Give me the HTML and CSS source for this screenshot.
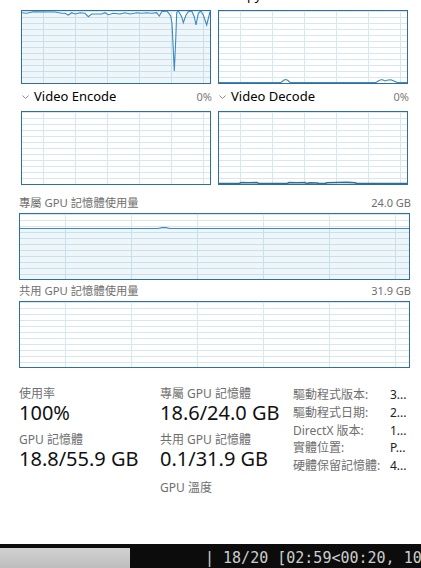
FILE: index.html
```html
<!DOCTYPE html>
<html lang="zh-Hant">
<head>
    <meta charset="UTF-8">
    <meta name="viewport" content="width=device-width, initial-scale=1.0">
    <title>GPU</title>
    <link rel="stylesheet" href="styles.css">
</head>
<body>
    <div class="page">
        <div class="engines">
            <div class="engine">
                <div class="engine-head">
                    <svg class="chev" viewBox="0 0 7 4"><path d="M0.5 0.5 L3.5 3.5 L6.5 0.5"/></svg>
                    <span class="engine-name">3D</span>
                    <span class="engine-pct">100%</span>
                </div>
                <div class="graph">
                    <svg viewBox="0 0 188 72" preserveAspectRatio="none">
                        <path class="area" d="M0 1.7 L4.7 2.3 L11.3 0.7 L33 1 L39.7 2.3 L43 2.3 L46.3 4 L49.7 1.7 L53 3 L58 1.7 L63 2.3 L66.3 5.7 L69.7 3 L79.7 3 L83 1.7 L86.3 3.7 L91.3 2.3 L98 3 L103 1.7 L108 3 L114.7 1.7 L119.7 2.3 L124.7 1.7 L129.7 2.3 L134.7 1.7 L137.3 5 L139.7 0.7 L144.7 0 L146.3 1.7 L148.7 5 L150 12.3 L151.3 39 L152.3 60 L153.7 29 L154.7 1.7 L156.3 0 L159.7 5.7 L161.3 11.7 L164 4 L166.3 0.7 L169.7 0 L172.3 5.7 L174 14 L176.3 2.3 L178.7 0 L181.3 4 L184.7 14 L188 0.7 L188 72 L0 72 Z"/>
                        <polyline class="line" points="0,1.7 4.7,2.3 11.3,0.7 33,1 39.7,2.3 43,2.3 46.3,4 49.7,1.7 53,3 58,1.7 63,2.3 66.3,5.7 69.7,3 79.7,3 83,1.7 86.3,3.7 91.3,2.3 98,3 103,1.7 108,3 114.7,1.7 119.7,2.3 124.7,1.7 129.7,2.3 134.7,1.7 137.3,5 139.7,0.7 144.7,0 146.3,1.7 148.7,5 150,12.3 151.3,39 152.3,60 153.7,29 154.7,1.7 156.3,0 159.7,5.7 161.3,11.7 164,4 166.3,0.7 169.7,0 172.3,5.7 174,14 176.3,2.3 178.7,0 181.3,4 184.7,14 188,0.7"/>
                    </svg>
                </div>
            </div>
            <div class="engine">
                <div class="engine-head">
                    <svg class="chev" viewBox="0 0 7 4"><path d="M0.5 0.5 L3.5 3.5 L6.5 0.5"/></svg>
                    <span class="engine-name">Copy</span>
                    <span class="engine-pct">0%</span>
                </div>
                <div class="graph">
                    <svg viewBox="0 0 188 72" preserveAspectRatio="none">
                        <polyline class="line" points="0,71.5 62,71.5 65,69 67,68.5 69,69.5 71,71.5 157,71.5 160,69.5 163,68.5 166,70 169,69 172,68.8 175,70 178,71.5 188,71.5"/>
                    </svg>
                </div>
            </div>
            <div class="engine">
                <div class="engine-head">
                    <svg class="chev" viewBox="0 0 7 4"><path d="M0.5 0.5 L3.5 3.5 L6.5 0.5"/></svg>
                    <span class="engine-name">Video Encode</span>
                    <span class="engine-pct">0%</span>
                </div>
                <div class="graph"></div>
            </div>
            <div class="engine">
                <div class="engine-head">
                    <svg class="chev" viewBox="0 0 7 4"><path d="M0.5 0.5 L3.5 3.5 L6.5 0.5"/></svg>
                    <span class="engine-name">Video Decode</span>
                    <span class="engine-pct">0%</span>
                </div>
                <div class="graph">
                    <svg viewBox="0 0 188 72" preserveAspectRatio="none">
                        <polyline class="line thick" points="0,71.6 20,71.6 22,70.6 30,70.8 38,70.6 40,71.6 68,71.6 70,70.6 78,70.8 86,70.6 88,71.6 91,70.8 98,71 100,71.6 106,71.6 108,70.7 118,70.5 128,70.4 136,70.8 138,71.6 188,71.6"/>
                    </svg>
                </div>
            </div>
        </div>

        <div class="mem-head">
            <span>專屬 GPU 記憶體使用量</span>
            <span class="mem-max">24.0 GB</span>
        </div>
        <div class="graph graph-wide">
            <svg viewBox="0 0 389 65" preserveAspectRatio="none">
                <path class="area" d="M0 14.5 L138 14.5 L142 13.6 L146 13.6 L150 14.5 L389 14.5 L389 65 L0 65 Z"/>
                <polyline class="line" points="0,14.5 138,14.5 142,13.6 146,13.6 150,14.5 389,14.5"/>
            </svg>
        </div>

        <div class="mem-head mem-head-shared">
            <span>共用 GPU 記憶體使用量</span>
            <span class="mem-max">31.9 GB</span>
        </div>
        <div class="graph graph-wide"></div>

        <div class="stats">
            <div class="stat-col">
                <div class="stat-label">使用率</div>
                <div class="stat-value">100%</div>
                <div class="stat-label">GPU 記憶體</div>
                <div class="stat-value">18.8/55.9 GB</div>
            </div>
            <div class="stat-col">
                <div class="stat-label">專屬 GPU 記憶體</div>
                <div class="stat-value">18.6/24.0 GB</div>
                <div class="stat-label">共用 GPU 記憶體</div>
                <div class="stat-value">0.1/31.9 GB</div>
                <div class="stat-label stat-temp">GPU 溫度</div>
            </div>
            <dl class="info">
                <dt>驅動程式版本:</dt><dd>3...</dd>
                <dt>驅動程式日期:</dt><dd>2...</dd>
                <dt>DirectX 版本:</dt><dd>1...</dd>
                <dt>實體位置:</dt><dd>P...</dd>
                <dt>硬體保留記憶體:</dt><dd>4...</dd>
            </dl>
        </div>
    </div>

    <div class="term">
        <span class="term-bar"></span>
        <span class="term-text">| 18/20 [02:59&lt;00:20, 10.01s/it]</span>
    </div>
</body>
</html>
```

FILE: styles.css
```css
body {
    margin: 0;
    height: 568px;
    display: flex;
    flex-direction: column;
    overflow: hidden;
    font-family: "Noto Sans", "Noto Sans CJK TC", sans-serif;
    background-color: #fff;
    color: #000;
}

.page {
    flex: 1;
    padding: 0 11px 0 19px;
    overflow: hidden;
}

/* engine graphs */

.engines {
    display: grid;
    grid-template-columns: 190px 190px;
    column-gap: 7px;
    padding-left: 2px;
    margin-top: -17px;
}

.engine-head {
    box-sizing: border-box;
    display: flex;
    align-items: center;
    height: 27px;
    padding-bottom: 3px;
}

.chev {
    width: 7px;
    height: 4px;
    margin: 1px 5px 0 1px;
    fill: none;
    stroke: #8a8a8a;
    stroke-width: 1;
}

.engine-name {
    flex: 1;
    font-size: 13px;
}

.engine-pct {
    font-size: 11px;
    color: #7a7a7a;
    margin-right: -1px;
}

.graph {
    box-sizing: border-box;
    height: 74px;
    border: 1px solid #2d7099;
    background-color: #fff;
    background-image:
        linear-gradient(to right, #d7e7f1 1px, transparent 1px),
        linear-gradient(to bottom, #d7e7f1 1px, transparent 1px);
    background-size: 32px 100%, 100% 6px;
    background-position: 21px 0, 0 0;
}

.graph svg {
    display: block;
    width: 100%;
    height: 100%;
}

.graph .area {
    fill: rgba(17, 125, 187, 0.07);
}

.graph .line {
    fill: none;
    stroke: #3f88bd;
    stroke-width: 1.1;
    vector-effect: non-scaling-stroke;
}

.graph .line.thick {
    stroke: #2d6f96;
    stroke-width: 1.6;
}

.graph-wide {
    height: 67px;
    background-size: 66px 100%, 100% 6px;
    background-position: 45px 0, 0 0;
}

/* memory headings */

.mem-head {
    display: flex;
    justify-content: space-between;
    align-items: baseline;
    font-size: 11.3px;
    line-height: 16px;
    color: #6f6f6f;
    margin: 10px 0 2px;
}

.mem-head-shared {
    margin-top: 3px;
}

.mem-max {
    font-size: 11px;
    margin-right: -1px;
}

/* stats */

.stats {
    display: grid;
    grid-template-columns: 141px 133px 1fr;
    align-items: start;
    margin-top: 18px;
}

.stat-label {
    font-size: 12px;
    line-height: 16px;
    color: #6f6f6f;
}

.stat-value {
    font-size: 20px;
    line-height: 22px;
    color: #111;
}

.stat-value + .stat-label {
    margin-top: 8px;
}

.stat-value + .stat-temp {
    margin-top: 10px;
}

.info {
    display: grid;
    grid-template-columns: 97px auto;
    align-content: start;
    margin: 0;
    font-size: 12px;
    line-height: 17.75px;
    white-space: nowrap;
}

.info dt {
    color: #6f6f6f;
}

.info dd {
    margin: 0;
    color: #222;
}

/* terminal strip */

.term {
    flex: none;
    box-sizing: border-box;
    height: 24px;
    padding-top: 4px;
    display: flex;
    background-color: #0c0c0c;
    white-space: nowrap;
    overflow: hidden;
}

.term-bar {
    flex: none;
    width: 130px;
    height: 20px;
    background: linear-gradient(#d2d2d2, #bdbdbd);
}

.term-text {
    margin-left: 75px;
    font-family: "DejaVu Sans Mono", monospace;
    font-size: 15px;
    line-height: 20px;
    color: #cccccc;
}
```
